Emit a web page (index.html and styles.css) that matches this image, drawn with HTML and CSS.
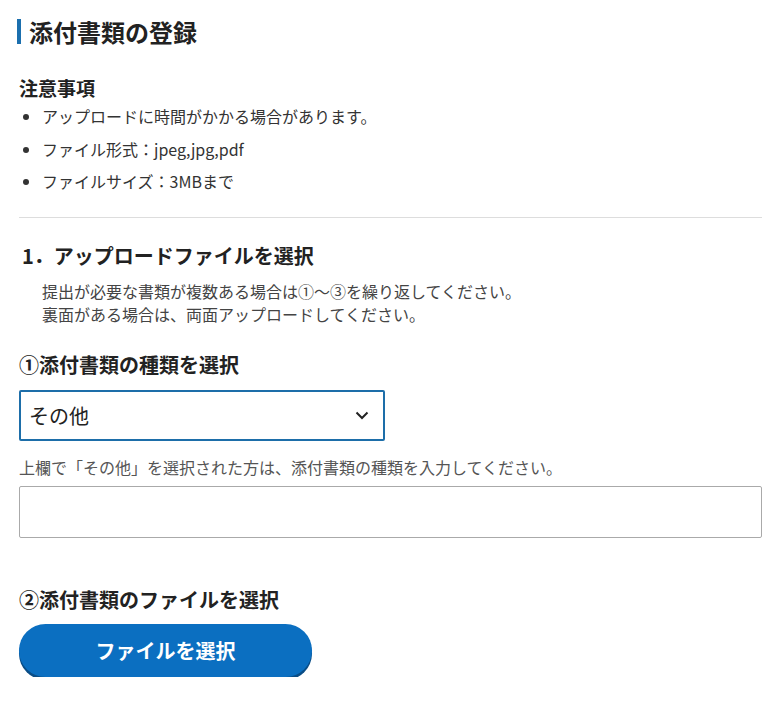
FILE: index.html
```html
<!DOCTYPE html>
<html lang="ja">
<head>
<meta charset="utf-8">
<link rel="stylesheet" href="styles.css">
</head>
<body>
<main class="page">
  <h1 class="title">添付書類の登録</h1>

  <section class="notes">
    <h2 class="notes-head">注意事項</h2>
    <ul class="notes-list">
      <li>アップロードに時間がかかる場合があります。</li>
      <li>ファイル形式：jpeg,jpg,pdf</li>
      <li>ファイルサイズ：3MBまで</li>
    </ul>
  </section>

  <hr class="divider">

  <section class="step">
    <h2 class="step-head">1．アップロードファイルを選択</h2>
    <p class="step-desc">提出が必要な書類が複数ある場合は①～③を繰り返してください。<br>裏面がある場合は、両面アップロードしてください。</p>

    <h3 class="sub-head">①添付書類の種類を選択</h3>
    <div class="select">
      <span class="select-value">その他</span>
      <svg class="chevron" width="14" height="9" viewBox="0 0 14 9"><path d="M1.5 1.5 L7 7 L12.5 1.5" fill="none" stroke="#222" stroke-width="2"/></svg>
    </div>
    <p class="hint">上欄で「その他」を選択された方は、添付書類の種類を入力してください。</p>
    <div class="text-input"></div>

    <h3 class="sub-head sub-head-file">②添付書類のファイルを選択</h3>
    <button class="file-btn">ファイルを選択</button>
  </section>
</main>
</body>
</html>
```

FILE: styles.css
```css
* { box-sizing: border-box; }
body {
  margin: 0;
  background: #fff;
  font-family: "Noto Sans CJK JP", "Noto Sans", sans-serif;
  color: #222;
}
.page {
  padding: 19px 14px 0 19px;
  width: 776px;
}
.title {
  margin: 0 0 0 -2px;
  font-size: 24px;
  font-weight: 700;
  line-height: 25px;
  height: 25px;
  border-left: 4px solid #1b6fae;
  padding-left: 8px;
}
.notes { margin-top: 32px; }
.notes-head {
  margin: 0;
  font-size: 19px;
  font-weight: 700;
  line-height: 24px;
}
.notes-list {
  margin: 0;
  padding: 0 0 0 23px;
  font-size: 16px;
  line-height: 32.5px;
  color: #333;
}
.divider {
  border: 0;
  border-top: 1px solid #ddd;
  margin: 19px 0 0;
}
.step { padding-top: 24px; }
.step-head {
  margin: 0 0 0 3px;
  font-size: 20px;
  font-weight: 700;
  line-height: 28px;
}
.step-desc {
  margin: 10px 0 0 23px;
  font-size: 16px;
  line-height: 23px;
  color: #444;
}
.sub-head {
  margin: 25px 0 0;
  font-size: 20px;
  font-weight: 700;
  line-height: 28px;
}
.select {
  margin-top: 11px;
  width: 366px;
  height: 51px;
  border: 2px solid #1d6ea9;
  border-radius: 2px;
  display: flex;
  align-items: center;
  justify-content: space-between;
  padding: 0 14px 0 8px;
}
.select-value { font-size: 20px; color: #222; }
.chevron { display: block; }
.hint {
  margin: 14px 0 0;
  font-size: 16px;
  line-height: 24px;
  color: #555;
}
.text-input {
  margin-top: 7px;
  height: 52px;
  border: 1px solid #aaa;
  border-radius: 2px;
}
.sub-head-file { margin-top: 48px; }
.file-btn {
  margin-top: 10px;
  width: 293px;
  height: 53px;
  border: 0;
  border-radius: 27px;
  background: #0b6fc1;
  box-shadow: 0 3px 0 #0a4d86;
  color: #fff;
  font-family: inherit;
  font-size: 20px;
  font-weight: 700;
  display: flex;
  align-items: center;
  justify-content: center;
}
```
